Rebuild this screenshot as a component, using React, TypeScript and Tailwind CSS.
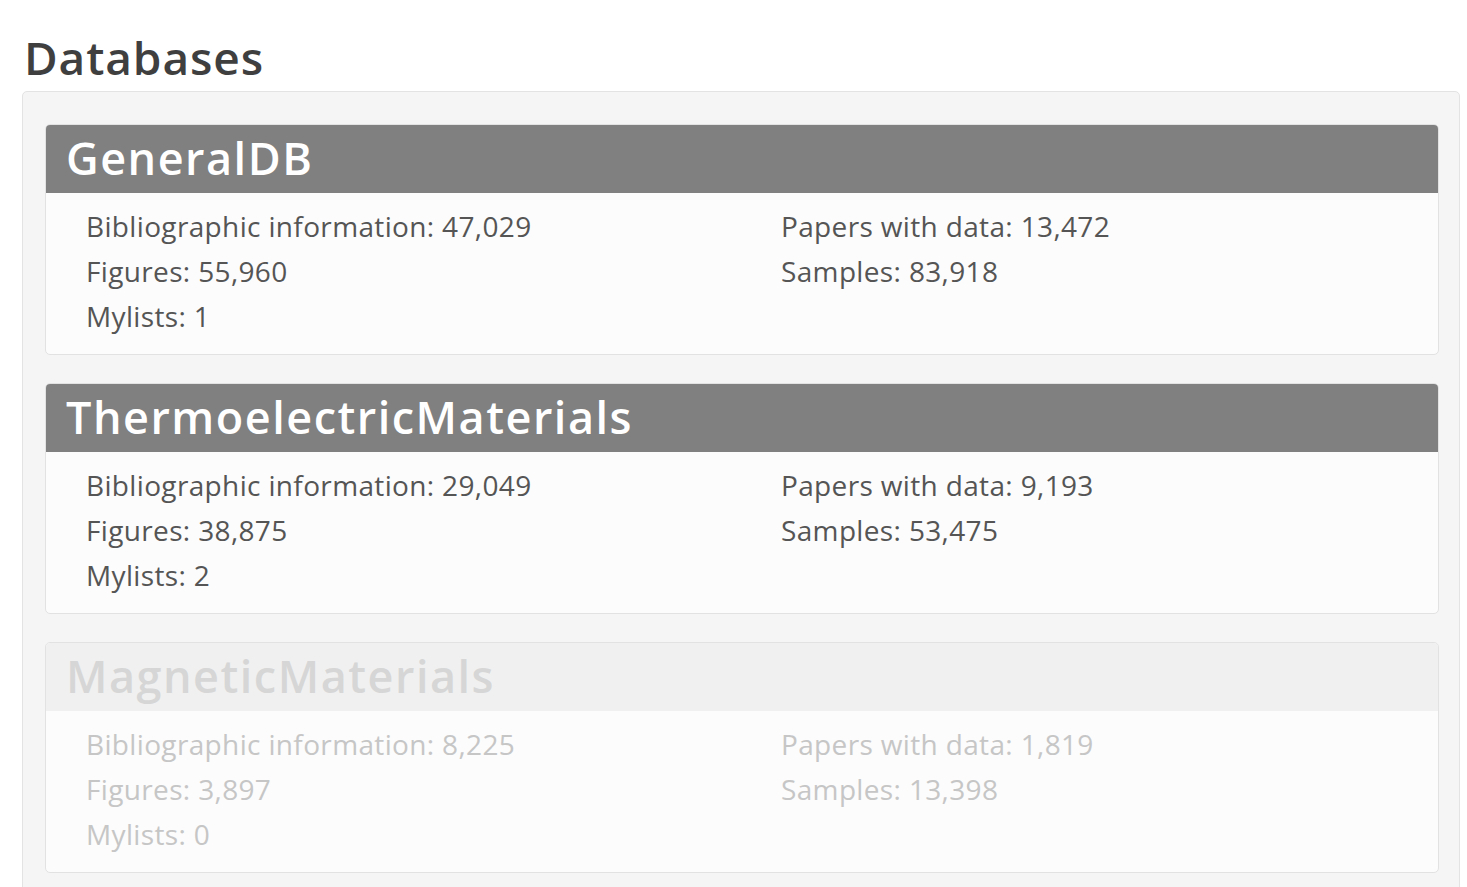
type Db = {
  name: string;
  bib: string;
  papers: string;
  figures: string;
  samples: string;
  mylists: string;
  disabled?: boolean;
};

const databases: Db[] = [
  { name: "GeneralDB", bib: "47,029", papers: "13,472", figures: "55,960", samples: "83,918", mylists: "1" },
  { name: "ThermoelectricMaterials", bib: "29,049", papers: "9,193", figures: "38,875", samples: "53,475", mylists: "2" },
  { name: "MagneticMaterials", bib: "8,225", papers: "1,819", figures: "3,897", samples: "13,398", mylists: "0", disabled: true },
];

function DbCard({ db }: { db: Db }) {
  const off = db.disabled;
  return (
    <div className="overflow-hidden rounded-[5px] border border-[#e2e2e2] bg-[#fcfcfc]">
      <div className={off ? "h-[68px] bg-[#f0f0f0] px-[20px]" : "h-[68px] bg-[#808080] px-[20px]"}>
        <h2
          className={
            off
              ? "text-[45px] font-semibold leading-[66px] tracking-[1.5px] text-[#d6d6d6]"
              : "text-[45px] font-semibold leading-[66px] tracking-[1.5px] text-white"
          }
        >
          {db.name}
        </h2>
      </div>
      <div
        className={
          off
            ? "grid grid-cols-[695px_1fr] pb-[15px] pl-[40px] pt-[11px] text-[28px] leading-[45px] tracking-[0.35px] text-[#c6c6c6]"
            : "grid grid-cols-[695px_1fr] pb-[15px] pl-[40px] pt-[11px] text-[28px] leading-[45px] tracking-[0.35px] text-[#555555]"
        }
      >
        <div>
          <p>Bibliographic information: {db.bib}</p>
          <p>Figures: {db.figures}</p>
          <p>Mylists: {db.mylists}</p>
        </div>
        <div>
          <p>Papers with data: {db.papers}</p>
          <p>Samples: {db.samples}</p>
        </div>
      </div>
    </div>
  );
}

export default function App() {
  return (
    <div className="min-h-screen bg-white pl-[22px] pr-[7px] pt-[30px] font-['Open_Sans',sans-serif] text-[#444]">
      <h1 className="mb-[6px] pl-[2px] text-[46px] font-semibold leading-[55px] tracking-[0.9px] text-[#3f3f3f]">
        Databases
      </h1>
      <div className="flex flex-col gap-[28px] rounded-[5px] border border-[#e3e3e3] bg-[#f5f5f5] pb-[30px] pl-[22px] pr-[20px] pt-[32px]">
        {databases.map((db) => (
          <DbCard key={db.name} db={db} />
        ))}
      </div>
    </div>
  );
}
